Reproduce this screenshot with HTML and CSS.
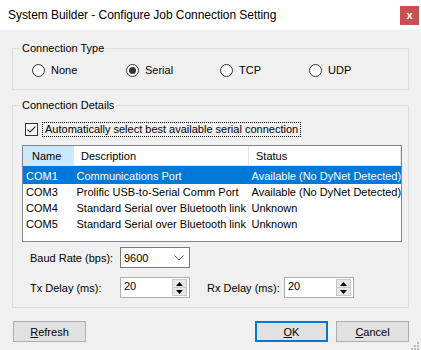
FILE: index.html
```html
<!DOCTYPE html>
<html lang="en">
<head>
  <meta charset="UTF-8">
  <meta name="viewport" content="width=device-width, initial-scale=1.0">
  <link rel="stylesheet" href="styles.css">
  <title>System Builder - Configure Job Connection Setting</title>
</head>
<body>
  <div id="dialog">
    <div class="titlebar">
      <span class="title">System Builder - Configure Job Connection Setting</span>
      <span class="close">x</span>
    </div>

    <div class="content">
      <fieldset class="group group-type">
        <legend>Connection Type</legend>
        <div class="radio-row">
          <label class="radio w94"><span class="dot"></span>None</label>
          <label class="radio w94"><span class="dot checked"></span>Serial</label>
          <label class="radio w89"><span class="dot"></span>TCP</label>
          <label class="radio"><span class="dot"></span>UDP</label>
        </div>
      </fieldset>

      <fieldset class="group group-details">
        <legend>Connection Details</legend>
        <div class="check-row">
          <span class="checkbox">
            <svg width="11" height="11" viewBox="0 0 11 11"><path d="M1.5 5.5 L4 8 L9.5 2.5" fill="none" stroke="#333" stroke-width="1.2"/></svg>
          </span>
          <span class="check-label">Automatically select best available serial connection</span>
        </div>

        <div class="list">
          <table>
            <thead>
              <tr>
                <th class="col-name hot">Name</th>
                <th class="col-desc">Description</th>
                <th class="col-status">Status</th>
              </tr>
            </thead>
            <tbody>
              <tr class="selected">
                <td>COM1</td>
                <td>Communications Port</td>
                <td>Available (No DyNet Detected)</td>
              </tr>
              <tr>
                <td>COM3</td>
                <td>Prolific USB-to-Serial Comm Port</td>
                <td>Available (No DyNet Detected)</td>
              </tr>
              <tr>
                <td>COM4</td>
                <td>Standard Serial over Bluetooth link</td>
                <td>Unknown</td>
              </tr>
              <tr>
                <td>COM5</td>
                <td>Standard Serial over Bluetooth link</td>
                <td>Unknown</td>
              </tr>
            </tbody>
          </table>
        </div>

        <div class="field-row baud-row">
          <span class="field-label">Baud Rate (bps):</span>
          <div class="combo">
            <span>9600</span>
            <svg width="10" height="6" viewBox="0 0 10 6"><path d="M0.5 0.5 L5 5 L9.5 0.5" fill="none" stroke="#555" stroke-width="1"/></svg>
          </div>
        </div>

        <div class="field-row delay-row">
          <span class="field-label">Tx Delay (ms):</span>
          <div class="spin">
            <span>20</span>
            <div class="spin-btns">
              <span class="spin-btn"><svg width="7" height="4" viewBox="0 0 7 4"><path d="M0 4 L3.5 0 L7 4 Z" fill="#000"/></svg></span>
              <span class="spin-btn"><svg width="7" height="4" viewBox="0 0 7 4"><path d="M0 0 L3.5 4 L7 0 Z" fill="#000"/></svg></span>
            </div>
          </div>
          <span class="field-label rx-label">Rx Delay (ms):</span>
          <div class="spin">
            <span>20</span>
            <div class="spin-btns">
              <span class="spin-btn"><svg width="7" height="4" viewBox="0 0 7 4"><path d="M0 4 L3.5 0 L7 4 Z" fill="#000"/></svg></span>
              <span class="spin-btn"><svg width="7" height="4" viewBox="0 0 7 4"><path d="M0 0 L3.5 4 L7 0 Z" fill="#000"/></svg></span>
            </div>
          </div>
        </div>
      </fieldset>

      <div class="buttons">
        <button class="btn"><u>R</u>efresh</button>
        <div class="spacer"></div>
        <button class="btn default"><u>O</u>K</button>
        <button class="btn"><u>C</u>ancel</button>
      </div>
    </div>

    <div class="grip">
      <svg width="8" height="8" viewBox="0 0 8 8">
        <rect x="6" y="0" width="2" height="2" fill="#bcbcbc"/>
        <rect x="3" y="3" width="2" height="2" fill="#bcbcbc"/>
        <rect x="6" y="3" width="2" height="2" fill="#bcbcbc"/>
        <rect x="0" y="6" width="2" height="2" fill="#bcbcbc"/>
        <rect x="3" y="6" width="2" height="2" fill="#bcbcbc"/>
        <rect x="6" y="6" width="2" height="2" fill="#bcbcbc"/>
      </svg>
    </div>
  </div>
</body>
</html>
```

FILE: styles.css
```css
body {
  margin: 0;
  font-family: 'Liberation Sans', Arial, sans-serif;
  font-size: 11px;
  color: #000;
  background-color: #f0f0f0;
}

#dialog {
  position: relative;
  width: 421px;
  height: 350px;
  background-color: #f0f0f0;
  overflow: hidden;
}

.titlebar {
  height: 30px;
  background-color: #fff;
  display: flex;
  align-items: center;
  padding-left: 8px;
  padding-right: 2px;
  font-size: 12px;
}

.title {
  flex: 1;
  letter-spacing: -0.05px;
}

.close {
  width: 19px;
  height: 19px;
  background-color: #c75050;
  color: #fff;
  font-weight: bold;
  font-size: 11px;
  display: flex;
  align-items: center;
  justify-content: center;
}

.content {
  padding: 0 12px 0 12px;
}

.group {
  margin: 0;
  padding: 0;
  border: 1px solid #dcdcdc;
  min-width: 0;
}

.group legend {
  margin-left: 7px;
  padding: 0 2px;
  line-height: 14px;
}

.group-type {
  margin-top: 11px;
}

.group-details {
  margin-top: 8px;
}

/* radio buttons */
.radio-row {
  display: flex;
  height: 16px;
  margin: 7px 0 11px 19px;
  align-items: center;
}

.radio {
  display: flex;
  align-items: center;
  flex-shrink: 0;
}

.w94 { width: 94px; }
.w89 { width: 89px; }

.dot {
  width: 11px;
  height: 11px;
  border: 1px solid #333;
  border-radius: 50%;
  background-color: #fff;
  margin-right: 6px;
  display: flex;
  align-items: center;
  justify-content: center;
}

.dot.checked::after {
  content: "";
  width: 7px;
  height: 7px;
  border-radius: 50%;
  background-color: #333;
}

/* checkbox */
.check-row {
  display: flex;
  align-items: center;
  height: 15px;
  margin: 10px 0 0 12px;
}

.checkbox {
  width: 11px;
  height: 11px;
  border: 1px solid #333;
  background-color: #fff;
  display: flex;
  align-items: center;
  justify-content: center;
}

.check-label {
  margin-left: 4px;
  padding: 0 2px;
  line-height: 13px;
  border: 1px dotted #000;
  white-space: nowrap;
}

/* list view */
.list {
  margin: 8px 0 0 9px;
  width: 378px;
  height: 95px;
  border: 1px solid #828790;
  background-color: #fff;
}

.list table {
  width: 100%;
  border-collapse: collapse;
  table-layout: fixed;
}

.list th {
  font-weight: normal;
  text-align: left;
  height: 19px;
  padding: 0 0 0 7px;
  border-right: 1px solid #e5e5e5;
  border-bottom: 1px solid #e5e5e5;
  white-space: nowrap;
}

.list th.col-name {
  width: 41px;
  padding-left: 9px;
}

.list th.col-desc {
  width: 167px;
}

.list th.hot {
  background-color: #cce8ff;
}

.list td {
  height: 16px;
  padding: 0 0 0 3px;
  white-space: nowrap;
  overflow: hidden;
}

.list tbody tr:first-child td {
  padding-top: 2px;
}

.list tr.selected td {
  background-color: #0078d7;
  color: #fff;
}

/* fields */
.field-row {
  display: flex;
  align-items: center;
}

.baud-row {
  margin-top: 5px;
}

.delay-row {
  margin-top: 9px;
  margin-bottom: 9px;
}

.field-label {
  width: 90px;
  margin-left: 17px;
  flex-shrink: 0;
  white-space: nowrap;
}

.rx-label {
  width: 77px;
  margin-left: 17px;
}

.combo {
  height: 19px;
  border: 1px solid #7a7a7a;
  background-color: #fff;
  display: flex;
  align-items: center;
  justify-content: space-between;
  padding: 0 5px 0 3px;
  width: 60px;
  flex-shrink: 0;
}

.spin {
  height: 19px;
  border: 1px solid #adadad;
  background-color: #fff;
  display: flex;
  align-items: flex-start;
  justify-content: space-between;
  padding-left: 3px;
  width: 65px;
  flex-shrink: 0;
}

.spin > span {
  line-height: 17px;
}

.spin-btns {
  display: flex;
  flex-direction: column;
  width: 15px;
  height: 17px;
  margin: 1px 2px 0 0;
}

.spin-btn {
  flex: 1;
  background-color: #e8e8e8;
  border: 1px solid #c8c8c8;
  display: flex;
  align-items: center;
  justify-content: center;
}

.spin-btn + .spin-btn {
  border-top: none;
}

/* buttons */
.buttons {
  display: flex;
  margin-top: 13px;
  padding-left: 1px;
}

.spacer {
  flex: 1;
}

.btn {
  width: 73px;
  height: 21px;
  background-color: #e1e1e1;
  border: 1px solid #adadad;
  font-family: 'Liberation Sans', Arial, sans-serif;
  font-size: 11px;
  padding: 0;
  margin-left: 8px;
  color: #000;
}

.btn:first-child {
  margin-left: 0;
}

.btn.default {
  border: 2px solid #0078d7;
}

.grip {
  position: absolute;
  right: 2px;
  bottom: 2px;
  width: 8px;
  height: 8px;
}
```
